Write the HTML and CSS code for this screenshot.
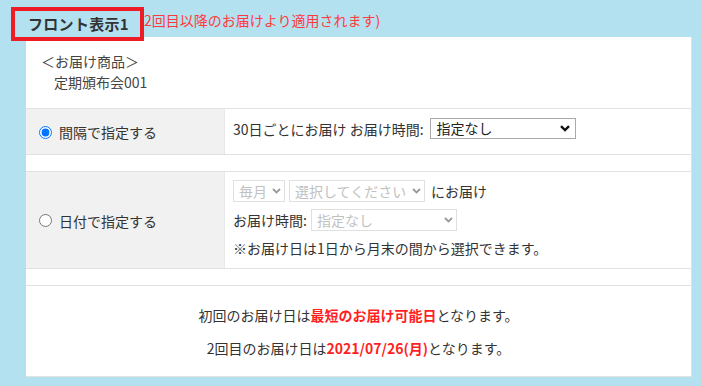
FILE: index.html
```html
<!DOCTYPE html>
<html lang="ja">
<head>
  <meta charset="UTF-8" />
  <title>フロント表示1</title>
  <link rel="stylesheet" href="styles.css">
</head>
<body>
  <div class="header">
    <h2 class="front-title">フロント表示1</h2>
    <p class="front-note">2回目以降のお届けより適用されます)</p>
  </div>

  <div class="panel">
    <section class="product">
      <p>＜お届け商品＞</p>
      <p class="product-name">定期頒布会001</p>
    </section>

    <!-- 間隔で指定 -->
    <div class="row">
      <label class="row-label">
        <input type="radio" name="mode" checked>
        <span>間隔で指定する</span>
      </label>
      <div class="row-body row-body-interval">
        <div class="line line-interval">
          <span>30日ごとにお届け お届け時間:</span>
          <span class="select select-time">
            <select>
              <option>指定なし</option>
            </select>
            <svg width="10" height="7" viewBox="0 0 10 7"><path d="M1 1.2 L5 5 L9 1.2" fill="none" stroke="#111" stroke-width="2.4"/></svg>
          </span>
        </div>
      </div>
    </div>

    <div class="spacer"></div>

    <!-- 日付で指定 -->
    <div class="row">
      <label class="row-label">
        <input type="radio" name="mode">
        <span>日付で指定する</span>
      </label>
      <div class="row-body">
        <div class="line">
          <span class="select select-month is-disabled">
            <select disabled>
              <option>毎月</option>
            </select>
            <svg width="9" height="6" viewBox="0 0 9 6"><path d="M1 1 L4.5 4.5 L8 1" fill="none" stroke="#9a9a9a" stroke-width="1.8"/></svg>
          </span>
          <span class="select select-day is-disabled">
            <select disabled>
              <option>選択してください</option>
            </select>
            <svg width="9" height="6" viewBox="0 0 9 6"><path d="M1 1 L4.5 4.5 L8 1" fill="none" stroke="#9a9a9a" stroke-width="1.8"/></svg>
          </span>
          <span class="after-select">にお届け</span>
        </div>
        <div class="line">
          <span>お届け時間:</span>
          <span class="select select-time is-disabled">
            <select disabled>
              <option>指定なし</option>
            </select>
            <svg width="9" height="6" viewBox="0 0 9 6"><path d="M1 1 L4.5 4.5 L8 1" fill="none" stroke="#9a9a9a" stroke-width="1.8"/></svg>
          </span>
        </div>
        <p class="hint">※お届け日は1日から月末の間から選択できます。</p>
      </div>
    </div>

    <div class="spacer"></div>

    <section class="summary">
      <p>初回のお届け日は<strong>最短のお届け可能日</strong>となります。</p>
      <p>2回目のお届け日は<strong>2021/07/26(月)</strong>となります。</p>
    </section>
  </div>
</body>
</html>
```

FILE: styles.css
```css
* {
  margin: 0;
  padding: 0;
  box-sizing: border-box;
}

body {
  background-color: #b4e1f0;
  color: #333;
  font-family: "Noto Sans CJK JP", "Noto Sans", sans-serif;
  font-size: 14px;
  line-height: 20px;
}

.header {
  display: flex;
  align-items: center;
  padding: 7px 0 0 11px;
  height: 37px;
}

.front-title {
  position: relative;
  z-index: 1;
  width: 133px;
  height: 34px;
  border: 4px solid #ee1c25;
  padding-left: 13px;
  font-size: 15px;
  font-weight: bold;
  line-height: 26px;
  letter-spacing: 0.3px;
  color: #333;
  align-self: flex-start;
}

.front-note {
  color: #ff3b3b;
  font-size: 14px;
  margin-top: -4px;
}

.panel {
  margin-left: 26px;
  width: 666px;
  background: #fff;
  border: 1px solid #e2e2e2;
  border-left: none;
  border-top: none;
}

/* お届け商品 */
.product {
  padding: 14px 15px 0;
  height: 71px;
  color: #444;
}

.product-name {
  padding-left: 13px;
  margin-top: 1px;
}

.row {
  display: flex;
  border-top: 1px solid #e2e2e2;
}

.row-label {
  width: 199px;
  flex-shrink: 0;
  background: #f1f1f1;
  display: flex;
  align-items: center;
  gap: 7px;
  padding: 1px 0 0 13px;
  border-right: 1px solid #e8e8e8;
}

.row-label input {
  margin: 0;
  width: 13px;
  height: 13px;
}

.row-body {
  flex: 1;
  padding: 8px 8px 10px;
}

.row-body-interval {
  padding-top: 9px;
  padding-bottom: 8px;
}

.line {
  display: flex;
  align-items: center;
  gap: 4px;
  margin-bottom: 7px;
}

.line-interval {
  gap: 6px;
}

.after-select {
  margin-left: 2px;
}

.select {
  position: relative;
  display: inline-block;
}

.select select {
  appearance: none;
  -webkit-appearance: none;
  display: block;
  height: 21px;
  border: 1px solid #a9a9a9;
  border-radius: 0;
  background: #fff;
  font-family: inherit;
  font-size: 14px;
  line-height: 19px;
  color: #222;
  padding: 0 0 0 6px;
}

.select svg {
  position: absolute;
  right: 6px;
  top: 7px;
  pointer-events: none;
}

.is-disabled select {
  border-color: #d4d4d4;
  color: #a8a8a8;
  height: 22px;
  padding-left: 5px;
}

.is-disabled svg {
  right: 4px;
  top: 8px;
}

.select-time select {
  width: 146px;
}

.select-month select {
  width: 52px;
}

.select-day select {
  width: 136px;
}

.spacer {
  height: 17px;
  border-top: 1px solid #e2e2e2;
}

.summary {
  border-top: 1px solid #e2e2e2;
  text-align: center;
  padding: 19px 0 18px;
}

.summary p + p {
  margin-top: 13px;
}

.summary strong {
  color: #ff1f1f;
}
```
